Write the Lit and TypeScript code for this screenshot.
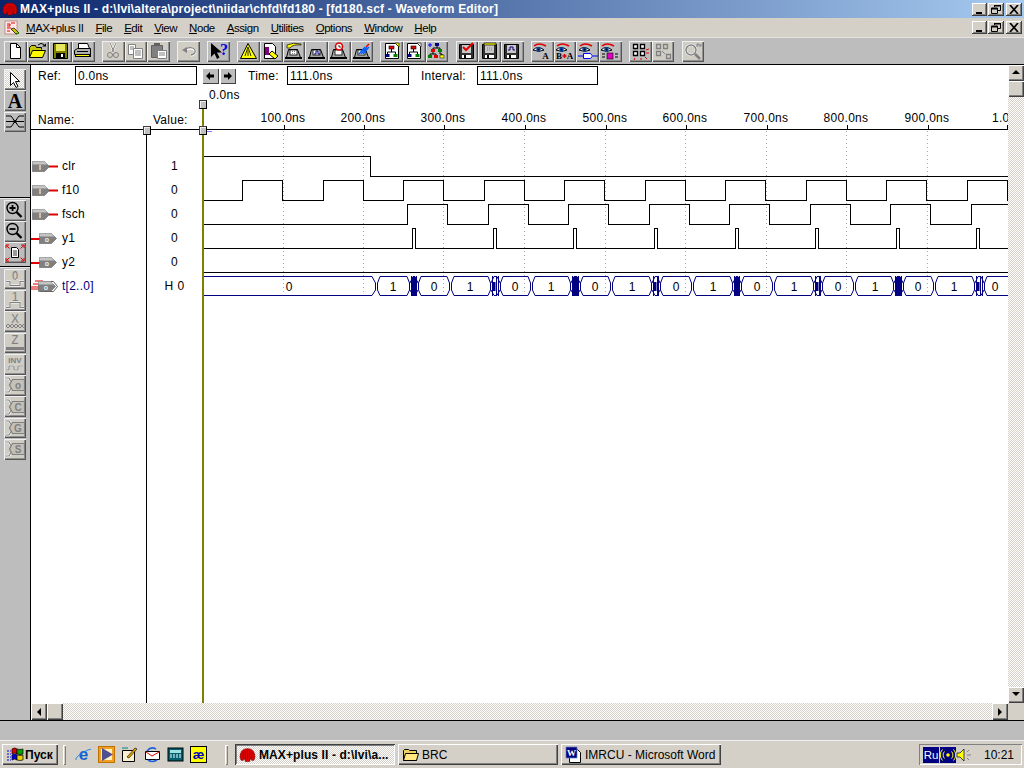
import { LitElement, html, css, svg } from "lit";
import { customElement } from "lit/decorators.js";

const K = "#000", G = "#808080", W = "#fff", N = "#000080", R = "#e00000", Y = "#ffff00";

const machine = (top: unknown, screen: unknown) => svg`
  <path d="M4.5 7.5h9l3 8h-14z" fill="#a8a8a8" stroke="${K}"/>
  <rect x="1" y="15" width="17" height="2" fill="${K}"/>
  <rect x="6" y="8" width="7" height="5" fill="${W}" stroke="${K}" stroke-width=".8"/>
  ${screen}${top}`;
const wave = svg`<path d="M7 12h2V9h2v3h2" fill="none" stroke="${N}"/>`;
const floppy = (inner: unknown) => svg`
  <path d="M2.5 2.5h14v14h-14z" fill="#303030" stroke="${K}"/>
  <rect x="5" y="3" width="9" height="8" fill="#c8c8c8"/>
  <rect x="5" y="13" width="9" height="3" fill="${W}"/><rect x="7" y="13" width="2" height="3" fill="${K}"/>
  ${inner}`;
const eye = (extra: unknown) => svg`
  <path d="M2 4q5-4 12 0" fill="none" stroke="${R}" stroke-width="1.6"/>
  <path d="M1 8q5-5 11 0q-5 3-11 0z" fill="${W}" stroke="${K}"/>
  <circle cx="6.5" cy="7.5" r="2.2" fill="#0050c0"/><circle cx="6.5" cy="7.5" r=".9" fill="${K}"/>
  ${extra}`;
const hier = (doc: boolean, fold: string) => svg`
  ${doc ? svg`<path d="M3.5 1.5h10l3 3v12h-13z" fill="${W}" stroke="${K}"/><path d="M13 1h4v4z" fill="${fold}" stroke="${K}" stroke-width=".6"/>` : ""}
  <rect x="7" y="4" width="5" height="3" fill="${R}" stroke="${K}" stroke-width=".6"/>
  <path d="M9.5 7v3M5.5 12v-2h8v2" fill="none" stroke="${K}"/>
  <rect x="3.5" y="12" width="4" height="3" fill="${N}"/><rect x="11.5" y="12" width="4" height="3" fill="#008000"/>`;
const lens = (c: string, inner: unknown) => svg`
  <circle cx="7.5" cy="7" r="5.5" fill="none" stroke="${c}" stroke-width="1.4"/>
  <path d="M11.5 11l5 5" stroke="${c}" stroke-width="2.4"/>${inner}`;
const dis = (ch: string, extra: unknown) => svg`
  <text x="10" y="10" text-anchor="middle" class="dt">${ch}</text>${extra}`;
const xbus = (ch: string) => svg`
  <path d="M1 2h3l4 7l-4 7H1" fill="none" stroke="${W}" stroke-width="2.4"/>
  <path d="M1 2h3l4 7l-4 7H1" fill="none" stroke="${G}" stroke-width="1.2"/>
  <path d="M19.5 3.500H7.500l-3 5.500l3 5.500h12z" fill="#c4c1b9" stroke="${G}" stroke-width="1.200"/>
  <text x="13" y="13" text-anchor="middle" class="dx">${ch}</text>`;

const ICONS: Record<string, unknown> = {
  new: svg`<path d="M5.5 1.5h6l4 4v11h-10z" fill="${W}" stroke="${K}"/><path d="M11.5 1.5v4h4" fill="none" stroke="${K}"/>`,
  open: svg`<path d="M1.5 15.5v-10l2-2h4l1 2h5v2" fill="#c8c800" stroke="${K}"/><path d="M1.5 15.5l3-7h13l-3 7z" fill="${Y}" stroke="${K}"/><path d="M10 3q3-3 6-.5" fill="none" stroke="${K}"/><path d="M14 4.500h4v-3z" fill="${K}"/>`,
  save: svg`<path d="M2.5 1.500h14v15h-14z" fill="#808000" stroke="${K}"/><rect x="5" y="2" width="9" height="7" fill="#e8e860"/><rect x="5" y="11" width="9" height="5" fill="${K}"/><rect x="10" y="12" width="2" height="3" fill="${W}"/>`,
  print: svg`<path d="M5.5 1.500h9l2 5h-11z" fill="${W}" stroke="${K}"/><path d="M1.500 8.500l3-2h13v6h-16z" fill="#b0b0b0" stroke="${K}"/><rect x="2" y="12" width="16" height="3" fill="${K}"/><rect x="4" y="9" width="11" height="1" fill="${K}"/><rect x="3" y="13" width="13" height="1" fill="${Y}"/>`,
  cut: svg`<path d="M7 1l4 9M13 1l-4 9" stroke="${W}" stroke-width="2"/><path d="M7 1l4 9M13 1l-4 9" stroke="${G}"/><circle cx="7" cy="13" r="2.500" fill="none" stroke="${G}"/><circle cx="13" cy="13" r="2.500" fill="none" stroke="${G}"/>`,
  copy: svg`<path d="M2.500 2.500h7v10h-7z" fill="${W}" stroke="${G}"/><path d="M7.500 6.500h9v10h-9z" fill="${W}" stroke="${G}"/><path d="M4 5h4M4 7h3M9 9h6M9 11h6M9 13h6" stroke="${G}"/>`,
  paste: svg`<path d="M2.500 3.500h11v12h-11z" fill="#808080" stroke="#606060"/><rect x="5" y="1" width="6" height="3" fill="#606060"/><path d="M8.500 8.500h9v8h-9z" fill="${W}" stroke="${G}"/><path d="M10 11h6M10 13h6" stroke="${G}"/>`,
  undo: svg`<path d="M6 7.500q8-3 10 1q1 4-4 5" fill="none" stroke="${W}" stroke-width="2.400"/><path d="M6 7q8-3 10 1q1 4-4 5" fill="none" stroke="${G}" stroke-width="1.300"/><path d="M3 8l5-3v6z" fill="${G}"/>`,
  help: svg`<path d="M2 1v14l3.500-3.500L8 17l2.500-1.500L8 10.500h5z" fill="${K}"/><text x="15" y="13" text-anchor="middle" class="q">?</text>`,
  tri: svg`<path d="M9 1.500l8.500 15H1.500z" fill="${Y}" stroke="${K}"/><path d="M9 5l-3 9M9 5l3 9M9 8v6" stroke="${K}" stroke-width=".8"/>`,
  doc: svg`<path d="M3.500 1.500h8l3 3v12h-11z" fill="${W}" stroke="${K}"/><rect x="4" y="5" width="4" height="8" fill="#800080"/><path d="M11 9l6 5l-3 3l-6-5z" fill="${Y}" stroke="${K}"/>`,
  m1: machine(svg`<path d="M3 6V3q6-3 14-1v1q-8-1-11 3z" fill="${Y}" stroke="${K}" stroke-width=".7"/>`, svg`<path d="M8 9.500h4M8 11.500h4" stroke="${G}" stroke-dasharray="1 1"/>`),
  m2: machine("", wave),
  m3: machine(svg`<circle cx="10" cy="4.500" r="3.500" fill="${W}" stroke="${R}" stroke-width="1.600"/><path d="M10 3v2h2" stroke="${K}" fill="none" stroke-width=".8"/>`, ""),
  m4: machine(svg`<path d="M7 12l6-7M9 12l6-7M11 12l6-7" stroke="#0060ff" stroke-width="1.300"/><path d="M14 5l3-3" stroke="${R}" stroke-width="1.500"/>`, ""),
  h1: hier(true, Y), h2: hier(true, W),
  h3: svg`<path d="M1 3h4M3 1v4" stroke="#0000ff"/><rect x="8" y="1" width="4" height="3" fill="${N}"/><rect x="4" y="7" width="4" height="3" fill="${R}"/><rect x="11" y="7" width="4" height="3" fill="#008000"/><rect x="1" y="13" width="4" height="3" fill="#008000"/><rect x="7" y="13" width="4" height="3" fill="${R}"/><rect x="13" y="13" width="4" height="3" fill="${Y}" stroke="${K}" stroke-width=".5"/><path d="M10 4v2M6 7V6h7v1M6 10v2M3 13v-1h6v1M13 10v2h2v1" fill="none" stroke="${K}"/>`,
  f1: floppy(svg`<path d="M6 5l3 3l7-7" fill="none" stroke="${R}" stroke-width="2"/>`),
  f2: floppy(svg`<path d="M4 3V1h12v2z" fill="${Y}" stroke="${K}" stroke-width=".7"/><path d="M7 6h5M7 8h5" stroke="${G}" stroke-dasharray="1 1"/>`),
  f3: floppy(svg`<path d="M6 8h2V5h3v3h2" fill="none" stroke="${N}"/>`),
  e1: eye(svg`<text x="13.500" y="17" text-anchor="middle" class="ea">A</text>`),
  e2: eye(svg`<text x="4" y="17" text-anchor="middle" class="ea">B</text><path d="M7.500 14h4M9.500 12v4" stroke="${R}" stroke-width="1.500"/><text x="15" y="17" text-anchor="middle" class="ea">A</text>`),
  e3: eye(svg`<path d="M0 14h5M15 14h5" stroke="#0000ff"/><path d="M5.500 11.500h7l2 2.500l-2 2.500h-7z" fill="${W}" stroke="#0000ff"/>`),
  e4: eye(svg`<rect x="7" y="11" width="6" height="6" fill="#e000c0" stroke="${K}" stroke-width=".6"/><path d="M2 12h3M2 15h3M15 12h3M15 15h3" stroke="${K}"/>`),
  g1: svg`<path d="M3.500 2.500h4v4h-4zM10.500 2.500h4v4h-4zM3.500 9.500h4v4h-4zM10.500 9.500h4v4h-4z" fill="${W}" stroke="${K}" stroke-width="1.300"/><path d="M16 8l3-1M16 11h3M5 16l-1 2M11 16v2M15 15l2 2" stroke="${R}"/>`,
  g2: svg`<path d="M3.500 2.500h4v4h-4zM10.500 2.500h4v4h-4zM3.500 9.500h4v4h-4zM13.500 12.500h4v4h-4z" fill="none" stroke="${G}" stroke-width="1.300"/><path d="M9 9l3 3" stroke="${G}"/>`,
  g3: svg`<circle cx="8" cy="8" r="5" fill="none" stroke="${W}" stroke-width="2.500"/><circle cx="8" cy="8" r="5" fill="none" stroke="${G}" stroke-width="1.500"/><path d="M12 12l5 5" stroke="${G}" stroke-width="2.500"/><path d="M14 5V2h2v2h2V2" fill="none" stroke="${G}"/>`,
  arrow: svg`<path d="M5.500 2.500v13l3-3l2.500 5l2-1l-2.500-5h4z" fill="${W}" stroke="${K}"/>`,
  cross: svg`<path d="M1 3h5l8 11h5M1 14h5l8-11h5" fill="none" stroke="${K}"/><path d="M1 8.500h18" stroke="${K}"/><path d="M8 6l2 2.500l2-2.500M8 11l2-2.500l2 2.500" fill="none" stroke="${K}"/>`,
  zin: lens(K, svg`<path d="M4.500 7h6M7.500 4v6" stroke="${K}" stroke-width="1.800"/>`),
  zout: lens(K, svg`<path d="M4.500 7h6" stroke="${K}" stroke-width="1.800"/>`),
  fit: svg`<path d="M6.500 3.500h5l2 2v8h-7z" fill="${W}" stroke="${K}"/><path d="M8 7h4M8 9h4M8 11h4" stroke="${K}" stroke-width=".8"/><path d="M1.500 1.500l3 3M18.500 1.500l-3 3M1.500 16.500l3-3M18.500 16.500l-3-3M1 4V1h3M16 1h3v3M1 14v3h3M16 17h3v-3" fill="none" stroke="${R}"/>`,
  d0: dis("0", svg`<path d="M1 11.500h4v4h10v-4h4" fill="none" stroke="${W}" stroke-width="2"/><path d="M1 11.500h4v4h10v-4h4" fill="none" stroke="${G}" stroke-width="1.200"/>`),
  d1: dis("1", svg`<path d="M1 16.500h4v-5h10v5h4" fill="none" stroke="${W}" stroke-width="2"/><path d="M1 16.500h4v-5h10v5h4" fill="none" stroke="${G}" stroke-width="1.200"/>`),
  dx: dis("X", svg`<path d="M1 13l2-2l2 2l2-2l2 2l2-2l2 2l2-2l2 2l2-2M1 13l2 2l2-2l2 2l2-2l2 2l2-2l2 2l2-2l2 2" fill="none" stroke="${G}"/>`),
  dz: dis("Z", svg`<rect x="1" y="13" width="18" height="3" fill="${G}"/>`),
  dinv: svg`<text x="10" y="8" text-anchor="middle" class="dinv">INV</text><path d="M1 15h3v-4h5v4h4v-4h5" fill="none" stroke="${W}" stroke-width="2"/><path d="M1 15h3v-4h5v4h4v-4h5" fill="none" stroke="${G}" stroke-width="1.200"/>`,
  xo: xbus("o"), xc: xbus("C"), xg: xbus("G"), xs: xbus("S"),
};

const icon = (k: string) => html`<svg class="ic" width="20" height="18" viewBox="0 0 20 18">${ICONS[k]}</svg>`;

const TOOLBAR: { icons: string[]; off?: boolean }[] = [
  { icons: ["new", "open", "save", "print"] },
  { icons: ["cut", "copy", "paste"], off: true },
  { icons: ["undo"], off: true },
  { icons: ["help"] },
  { icons: ["tri", "doc", "m1", "m2", "m3", "m4"] },
  { icons: ["h1", "h2", "h3"] },
  { icons: ["f1", "f2", "f3"] },
  { icons: ["e1", "e2", "e3", "e4"] },
];

const MENU: [string, string][] = [["M", "AX+plus II"], ["F", "ile"], ["E", "dit"], ["V", "iew"], ["N", "ode"], ["A", "ssign"], ["U", "tilities"], ["O", "ptions"], ["W", "indow"], ["H", "elp"]];

const logo = html`<svg width="16" height="14" viewBox="0 0 16 14">
  <path d="M1 9q0-8 7-8t7 8l-1 3h-2l-1-2l-1 3H6L5 10l-1 2H2z" fill="#e00000" stroke="#800000" stroke-width=".6"/>
  <path d="M4 4v6M8 2v9M12 4v6M6 3v7M10 3v7" stroke="#800000" stroke-width=".6"/></svg>`;

const winBtns = html`<div class="wb">
  <button class="wbtn"><svg width="10" height="9" viewBox="0 0 10 9"><rect x="1" y="7" width="6" height="2"/></svg></button>
  <button class="wbtn r2"><svg width="10" height="9" viewBox="0 0 10 9"><path d="M3.500 2V.5h6v5H7M.5 3.500h6v5h-6z M.5 3h6" fill="none" stroke="#000"/><path d="M3 0h7v1.500H3zM0 3h7v1.500H0z"/></svg></button>
  <button class="wbtn r3"><svg width="10" height="9" viewBox="0 0 10 9"><path d="M1 0l8 9M9 0l-8 9" stroke="#000" stroke-width="1.700"/></svg></button>
</div>`;

type Sig = { name: string; value: string; kind: "in" | "out" | "bus"; };
const SIGNALS: Sig[] = [
  { name: "clr", value: "1", kind: "in" },
  { name: "f10", value: "0", kind: "in" },
  { name: "fsch", value: "0", kind: "in" },
  { name: "y1", value: "0", kind: "out" },
  { name: "y2", value: "0", kind: "out" },
  { name: "t[2..0]", value: "H 0", kind: "bus" },
];

const PENT = "M0.500 2.500h12l5 5l-5 5h-12z";
const pinShape = (x: number, ch: string) => svg`<g transform="translate(${x} 0)">
  <path d="${PENT}" fill="#808080" stroke="#606060" stroke-width=".6"/>
  <path d="M.5 2.500h12l3 3H.5z" fill="#c4c4c4"/>
  <text x="8" y="11" text-anchor="middle" class="pt">${ch}</text></g>`;
const pin = (k: Sig["kind"]) => html`<svg class="pin" width="31" height="15" viewBox="0 0 31 15">
  ${k === "in" ? svg`${pinShape(1, "I")}<rect x="18" y="6.500" width="9" height="2" fill="#e00000"/>` : ""}
  ${k === "out" ? svg`<rect x="0" y="7" width="9" height="2" fill="#e00000"/>${pinShape(8, "o")}` : ""}
  ${k === "bus" ? svg`<path d="M4 2h8M2 5h8M0 8h8M0 10h8" stroke="#e00000" stroke-width="1.200"/>
    <path d="M9.500 2.500h13l4 5l-4 5h-13z" fill="none" stroke="#606060"/>${pinShape(7, "o")}` : ""}
</svg>`;

const GRID = [283, 363, 443, 524, 605, 685, 766, 846, 927];
const LABELS = ["100.0ns", "200.0ns", "300.0ns", "400.0ns", "500.0ns", "600.0ns", "700.0ns", "800.0ns", "900.0ns"];

function digital(lo: number, hi: number, startHigh: boolean, toggles: number[]) {
  let s = startHigh;
  let d = `M203 ${(s ? hi : lo) + 0.5}`;
  for (const t of toggles) {
    d += `H${Math.round(t) + 0.5}`;
    s = !s;
    d += `V${(s ? hi : lo) + 0.5}`;
  }
  return d + "H1008";
}
const seq = (start: number, step: number, end: number) => {
  const out: number[] = [];
  for (let x = start; x < end; x += step) out.push(x);
  return out;
};
const f10T = seq(242.2, 40.25, 1008);
const fschT = seq(407, 40.25, 1008);
const y1Pulse = [412, 493, 573, 654, 734.5, 815, 896, 976];
const y1T = y1Pulse.flatMap((x) => [x, x + 3]);

const SEG: [number, number, string, number][] = [
  [377, 410, "1", 393], [418, 450, "0", 434], [451, 491, "1", 470], [500, 531, "0", 515],
  [532, 571, "1", 551], [580, 611, "0", 595], [612, 652, "1", 632], [660, 692, "0", 676],
  [693, 733, "1", 713], [741, 773, "0", 757], [774, 814, "1", 794], [822, 854, "0", 838],
  [855, 894, "1", 875], [903, 934, "0", 918], [935, 975, "1", 954], [984, 1012, "0", 995],
];
const hexPath = (a: number, b: number) =>
  `M${a + 3} 276.5H${b - 3}L${b - 0.5} 283V290L${b - 3} 295.5H${a + 3}L${a + 0.5} 290V283Z`;

const MESS = [[410, 418], [491, 500], [571, 580], [652, 660], [733, 741], [814, 822], [894, 903], [975, 984]];

@customElement("app-root")
export class AppRoot extends LitElement {
  static styles = css`
    :host { display: block; width: 1024px; height: 768px; overflow: hidden; font: 12px "Liberation Sans", Arial, sans-serif; color: #000; background: #d4d0c8; }
    * { box-sizing: border-box; }
    .app { display: flex; flex-direction: column; height: 768px; }
    svg { display: block; flex: none; }
    .title { height: 18px; flex: none; display: flex; align-items: center; padding: 0 2px; background: linear-gradient(90deg, #0a246a, #a6caf0); color: #fff; font-weight: 700; font-size: 12px; letter-spacing: .19px; white-space: nowrap; }
    .title .t { margin-left: 2px; flex: 1; }
    .wb { display: flex; width: 50px; height: 13px; }
    .wbtn { width: 15px; height: 13px; padding: 0; background: #d4d0c8; border: 0; box-shadow: inset -1px -1px #404040, inset 1px 1px #fff, inset -2px -2px #808080; display: flex; align-items: center; justify-content: center; }
    .r2 { margin-left: 1px; width: 16px; } .r3 { margin-left: 2px; width: 16px; }
    .menu { height: 19px; display: flex; align-items: center; padding: 0 2px 0 4px; background: #d4d0c8; white-space: nowrap; font-size: 11.5px; letter-spacing: -.45px; gap: 12px; flex: none; }
    .menu .gap { flex: 1; }
    .menu .micon { margin-right: -6px; }
    .toolbar { height: 28px; flex: none; background: #bdbdbd; border-top: 1px solid #e4e4e4; border-bottom: 1px solid #000; display: flex; align-items: center; padding-left: 4px; gap: 7.33px; }
    .grp { display: flex; }
    .btn { width: 22.67px; height: 21px; flex: none; display: flex; align-items: center; justify-content: center; background: #bdbdbd; box-shadow: inset 1px 1px #f0f0f0, inset -1px -1px #555, inset -2px -2px #909090; }
    .off .btn, .btn.off { background: #d0cdc5; }
    .btn.tight { margin-left: -7.33px; }
    .work { flex: 1; display: flex; min-height: 0; }
    .tools { width: 31px; flex: none; background: #bdbdbd; border-right: 1px solid #000; display: flex; flex-direction: column; padding-top: 4px; }
    .tools .btn { margin: 0 0 .6px 4px; height: 20.7px; width: 22px; }
    .tools .sel { background: repeating-conic-gradient(#fff 0 25%, #d4d0c8 0 50%) 0 0 / 2px 2px; }
    .btn.bigA { font: 700 20px/1 "Liberation Serif", serif; }
    .tsep { height: 2px; flex: none; border-top: 1px solid #000; border-bottom: 1px solid #e8e8e8; }
    .s1 { margin-top: 64px; margin-bottom: 1px; }
    .s2 { margin-top: 2px; margin-bottom: 1px; }
    .right { flex: 1; display: flex; flex-direction: column; min-width: 0; }
    .upper { flex: 1; display: flex; min-height: 0; }
    .canvas { position: relative; flex: 1; background: #fff; display: flex; flex-direction: column; min-width: 0; overflow: hidden; font-size: 12px; }
    .fields { height: 20px; flex: none; display: flex; align-items: center; padding: 1px 0 0 7px; letter-spacing: .25px; }
    .lab { flex: none; }
    .lr { width: 37px; } .lt { width: 39px; margin-left: 12px; } .li { width: 56px; margin-left: 12px; }
    .box { height: 19px; border: 1px solid #000; padding: 0 2px; display: flex; align-items: center; flex: none; }
    .b1 { width: 122px; } .b2 { width: 120.5px; }
    .nav { display: flex; margin-left: 5px; gap: 1px; }
    .nbtn { width: 16.5px; height: 16px; background: #bdbdbd; box-shadow: inset 1px 1px #fff, inset -1px -1px #404040; display: flex; align-items: center; justify-content: center; }
    .head { height: 45px; flex: none; display: flex; border-bottom: 1px solid #000; letter-spacing: .25px; }
    .hn { width: 116px; padding: 28px 0 0 7px; } .hv { width: 56px; padding: 28px 0 0 6px; }
    .ruler text { font: 12px "Liberation Sans", Arial, sans-serif; letter-spacing: .3px; }
    .body { flex: 1; display: flex; min-height: 0; }
    .names { width: 116px; flex: none; border-right: 1px solid #000; padding-top: 24px; }
    .values { width: 56px; flex: none; padding-top: 24px; }
    .row { height: 24px; display: flex; align-items: center; font-size: 12px; letter-spacing: .25px; }
    .bus { color: #000080; }
    .vrow { justify-content: center; padding-right: 1px; letter-spacing: .5px; }
    .wave text { font: 12px "Liberation Sans", Arial, sans-serif; fill: #000; }
    .cursor { position: absolute; left: 171px; top: 43px; bottom: 0; width: 2px; background: #808000; }
    .mark { position: absolute; left: 176px; top: 66px; width: 5px; height: 1px; background: #8080ff; }
    .h { position: absolute; width: 8px; height: 9px; background: #c0c0c0; border: 1px solid #000; border-color: #404040 #000 #000 #404040; box-shadow: inset 1px 1px #eee; }
    .h1 { left: 112px; top: 61px; } .h2 { left: 168px; top: 61px; } .h3 { left: 168px; top: 35px; }
    .vs { width: 16px; flex: none; display: flex; flex-direction: column; }
    .hs { height: 17px; flex: none; display: flex; }
    .track { flex: 1; background: repeating-conic-gradient(#fff 0 25%, #d4d0c8 0 50%) 0 0 / 2px 2px; }
    .sb { background: #d4d0c8; box-shadow: inset 1px 1px #fff, inset -1px -1px #404040, inset -2px -2px #808080; display: flex; align-items: center; justify-content: center; flex: none; width: 16px; height: 16px; }
    .hs .sb { height: 17px; }
    .corner { width: 16px; flex: none; background: #d4d0c8; }
    .status { height: 21px; flex: none; background: #bdbdbd; border-top: 1px solid #000; border-bottom: 1px solid #f0f0f0; }
    .task { height: 27px; flex: none; background: #d4d0c8; display: flex; align-items: center; padding-left: 2px; white-space: nowrap; font-size: 12px; }
    .tb { height: 21px; display: flex; align-items: center; box-shadow: inset 1px 1px #fff, inset -1px -1px #404040, inset -2px -2px #808080; flex: none; overflow: hidden; }
    .start { width: 56px; font-weight: 700; padding-left: 5px; gap: 1px; font-size: 12px; }
    .div { width: 3px; height: 20px; margin-left: 5px; box-shadow: inset 1px 1px #fff, inset -1px -1px #808080; flex: none; }
    .ql { display: flex; margin-left: 9px; gap: 6px; }
    .ql svg { overflow: visible; }
    .d2 { margin-left: 18px; }
    .win { width: 160px; padding-left: 4px; gap: 3px; margin-left: 7px; }
    .win.on { font-weight: 700; background: repeating-conic-gradient(#fff 0 25%, #d4d0c8 0 50%) 0 0 / 2px 2px; box-shadow: inset 1px 1px #404040, inset -1px -1px #fff, inset 2px 2px #808080; letter-spacing: .1px; }
    .win + .win { margin-left: 3px; }
    .tray { margin-left: auto; margin-right: 2px; width: 103px; height: 21px; flex: none; display: flex; align-items: center; padding-left: 4px; box-shadow: inset 1px 1px #808080, inset -1px -1px #fff; }
    .ru { width: 16px; height: 16px; background: #000080; color: #fff; display: flex; align-items: center; justify-content: center; font-size: 11.5px; margin-right: 1px; }
    .clock { margin-left: 11px; }
    .dt { font: 700 12px "Liberation Sans", Arial, sans-serif; fill: #808080; stroke: #fff; stroke-width: .2px; }
    .dx { font: 700 10px "Liberation Sans", Arial, sans-serif; fill: #808080; }
    .dinv { font: 700 8px "Liberation Sans", Arial, sans-serif; fill: #808080; }
    .q { font: 700 16px "Liberation Serif", serif; fill: #0000e0; }
    .ea { font: 700 9px "Liberation Serif", serif; fill: #000; }
    .pt { font: 700 7px "Liberation Sans", Arial, sans-serif; fill: #f0f0f0; }
    .e { font: 700 17px "Liberation Sans", Arial, sans-serif; fill: #1060d0; }
    .ae { font: 700 13px "Liberation Sans", Arial, sans-serif; fill: #0000c0; }
    .wd { font: 700 9px "Liberation Serif", serif; fill: #fff; }
  `;

  private ruler() {
    return html`<svg class="ruler" width="805" height="44" viewBox="203 85 805 44">
      <text x="209" y="99">0.0ns</text>
      ${GRID.map((x, i) => svg`
        <path d="M${x + 1.5} 125V129" stroke="#000"/>
        <text x="${x}" y="122" text-anchor="middle">${LABELS[i]}</text>`)}
      <path d="M1007.500 125V129" stroke="#000"/>
      <text x="992" y="122">1.0us</text>
    </svg>`;
  }

  private wave() {
    return html`<svg class="wave" width="805" height="573" viewBox="203 130 805 573">
      ${GRID.map((x) => svg`<path d="M${x + 0.5} 131V297" stroke="#a8a8a8" stroke-dasharray="1 3" shape-rendering="crispEdges"/>`)}
      <g fill="none" stroke="#000" shape-rendering="crispEdges">
        <path d="${digital(176, 156, true, [370])}"/>
        <path d="${digital(200, 180, false, f10T)}"/>
        <path d="${digital(224, 204, false, fschT)}"/>
        <path d="${digital(248, 228, false, y1T)}"/>
        <path d="M203 272.500H1008"/>
      </g>
      <g fill="none" stroke="#000080">
        <path d="M203 276.500H372L375.500 283V290L372 295.500H203"/>
        ${SEG.map(([a, b]) => svg`<path d="${hexPath(a, b)}"/>`)}
        ${MESS.map(([a, b], i) => svg`
          <path d="M${a} 283L${a + 3} 276.500H${b - 3}L${b} 283M${a} 290L${a + 3} 295.500H${b - 3}L${b} 290"/>
          <path d="M${a + 1.500} 276V296M${b - 1.500} 276V296"/>
          ${i % 2 ? svg`<path d="M${a + 5.500} 276V296"/>` : ""}
          <rect x="${a + 2}" y="${i % 2 ? 282 : 277}" width="${i % 2 ? 2.5 : b - a - 4}" height="${i % 2 ? 9 : 19}" fill="#000080" stroke="none"/>`)}
      </g>
      <text x="289" y="291" text-anchor="middle">0</text>
      ${SEG.map(([, , t, x]) => svg`<text x="${x}" y="291" text-anchor="middle">${t}</text>`)}
    </svg>`;
  }

  private sb(dir: "u" | "d" | "l" | "r") {
    const p = { u: "M0 5h8L4 1z", d: "M0 1h8L4 5z", l: "M6 0v8L2 4z", r: "M2 0v8L6 4z" }[dir];
    return html`<div class="sb"><svg width="8" height="8" viewBox="0 0 8 8"><path d="${p}"/></svg></div>`;
  }

  render() {
    const smallIcon = html`<svg width="17" height="16" viewBox="0 0 16 14">${logo}</svg>`;
    return html`<div class="app">
      <div class="title">${logo}<span class="t">MAX+plus II - d:\\lvi\\altera\\project\\niidar\\chfd\\fd180 - [fd180.scf - Waveform Editor]</span>${winBtns}</div>
      <div class="menu">
        <svg class="micon" width="16" height="16" viewBox="0 0 16 16"><rect x="1" y="1" width="12" height="13" fill="#ffe8e8" stroke="#a06060" stroke-width=".6"/><path d="M3 4h3v2H3M7 3h4M3 8h4M3 11h3" fill="none" stroke="#e00000"/><path d="M7 9l5 5l3-1l-5-5z" fill="#d0c000" stroke="#000" stroke-width=".7"/><path d="M12 14l3-1" stroke="#008000"/></svg>
        ${MENU.map(([u, r]) => html`<span><u>${u}</u>${r}</span>`)}
        <span class="gap"></span>${winBtns}
      </div>
      <div class="toolbar">
        ${TOOLBAR.map((g) => html`<div class="grp ${g.off ? "off" : ""}">${g.icons.map((k) => html`<div class="btn">${icon(k)}</div>`)}</div>`)}
        <div class="btn">${icon("g1")}</div>
        <div class="btn off tight">${icon("g2")}</div>
        <div class="btn off">${icon("g3")}</div>
      </div>
      <div class="work">
        <div class="tools">
          <div class="btn sel">${icon("arrow")}</div>
          <div class="btn bigA">A</div>
          <div class="btn">${icon("cross")}</div>
          <div class="tsep s1"></div>
          <div class="btn">${icon("zin")}</div>
          <div class="btn">${icon("zout")}</div>
          <div class="btn">${icon("fit")}</div>
          <div class="tsep s2"></div>
          ${["d0", "d1", "dx", "dz", "dinv", "xo", "xc", "xg", "xs"].map((k) => html`<div class="btn off">${icon(k)}</div>`)}
        </div>
        <div class="right">
          <div class="upper">
            <div class="canvas">
              <div class="fields">
                <span class="lab lr">Ref:</span><div class="box b1">0.0ns</div>
                <div class="nav">
                  <div class="nbtn"><svg width="8" height="8" viewBox="0 0 8 8"><path d="M0 4L4 0v2.500h4v3H4V8z"/></svg></div>
                  <div class="nbtn"><svg width="8" height="8" viewBox="0 0 8 8"><path d="M8 4L4 0v2.500H0v3h4V8z"/></svg></div>
                </div>
                <span class="lab lt">Time:</span><div class="box b1">111.0ns</div>
                <span class="lab li">Interval:</span><div class="box b2">111.0ns</div>
              </div>
              <div class="head"><div class="hn">Name:</div><div class="hv">Value:</div>${this.ruler()}</div>
              <div class="body">
                <div class="names">${SIGNALS.map((s) => html`<div class="row ${s.kind === "bus" ? "bus" : ""}">${pin(s.kind)}<span>${s.name}</span></div>`)}</div>
                <div class="values">${SIGNALS.map((s) => html`<div class="row vrow">${s.value}</div>`)}</div>
                ${this.wave()}
              </div>
              <div class="cursor"></div><div class="mark"></div>
              <div class="h h1"></div><div class="h h2"></div><div class="h h3"></div>
            </div>
            <div class="vs">${this.sb("u")}<div class="sb"></div><div class="track"></div>${this.sb("d")}</div>
          </div>
          <div class="hs">${this.sb("l")}<div class="sb"></div><div class="track"></div>${this.sb("r")}<div class="corner"></div></div>
        </div>
      </div>
      <div class="status"></div>
      <div class="task">
        <div class="tb start">
          <svg width="17" height="15" viewBox="0 0 17 15"><path d="M5 2q3-2 5 0v5q-2-2-5 0z" fill="#e00000" stroke="#000" stroke-width=".7"/><path d="M10 2q3 1 6 0v5q-3 1-6 0z" fill="#00a000" stroke="#000" stroke-width=".7"/><path d="M5 8q3-2 5 0v5q-2-2-5 0z" fill="#0000e0" stroke="#000" stroke-width=".7"/><path d="M10 8q3 1 6 0v5q-3 1-6 0z" fill="#e8d000" stroke="#000" stroke-width=".7"/><path d="M0 4h4M0 7h4M0 10h4M0 13h4" stroke="#0000e0" stroke-dasharray="2 1"/></svg>
          <span>Пуск</span>
        </div>
        <div class="div"></div>
        <div class="ql">
          <svg width="17" height="17" viewBox="0 0 17 17"><text x="8.500" y="14" text-anchor="middle" class="e">e</text><path d="M1 14q-1-3 8-8q7-4 7-2" fill="none" stroke="#2080e0"/></svg>
          <svg width="17" height="17" viewBox="0 0 17 17"><rect x=".5" y=".5" width="16" height="16" fill="#f0a020" stroke="#c07000"/><rect x="3" y="3" width="11" height="11" fill="#fff0c0"/><path d="M4 2l11 6.500L4 15z" fill="#505090"/></svg>
          <svg width="17" height="17" viewBox="0 0 17 17"><path d="M1.500 4.500h12v11h-12z" fill="#f8f0d0" stroke="#000"/><path d="M6 11l8-9l2 1l-8 9z" fill="#e0a000" stroke="#000" stroke-width=".6"/><path d="M1 2h6" stroke="#008080"/></svg>
          <svg width="17" height="17" viewBox="0 0 17 17"><path d="M1.500 5.500h14v8h-14z" fill="#fff" stroke="#000"/><path d="M2 6l6 4l7-4" fill="none" stroke="#e00000"/><path d="M3 5q4-5 9-2M13 14q-5 3-9 0" fill="none" stroke="#2060e0" stroke-width="1.600"/></svg>
          <svg width="17" height="17" viewBox="0 0 17 17"><rect x="1" y="2" width="15" height="13" fill="#006070" stroke="#000"/><rect x="3" y="4" width="11" height="3" fill="#a0e0e0"/><path d="M3 9h11M3 11h11" stroke="#fff" stroke-dasharray="2 1"/></svg>
          <svg width="17" height="17" viewBox="0 0 17 17"><rect x=".5" y=".5" width="16" height="16" fill="#ffff00" stroke="#000"/><text x="8.500" y="13" text-anchor="middle" class="ae">æ</text></svg>
        </div>
        <div class="div d2"></div>
        <div class="tb win on">${smallIcon}<span>MAX+plus II - d:\\lvi\\a...</span></div>
        <div class="tb win"><svg width="17" height="15" viewBox="0 0 17 15"><path d="M1.500 13.500v-10l1-1h4l1 1h7v10z" fill="#f0d060" stroke="#000"/><path d="M1.500 13.500l2-7h13l-2 7z" fill="#ffe880" stroke="#000"/></svg><span>BRC</span></div>
        <div class="tb win"><svg width="17" height="17" viewBox="0 0 17 17"><path d="M4.500 3.500h8l3 3v10h-11z" fill="#fff" stroke="#000"/><rect x="1" y="1" width="11" height="11" fill="#000080" stroke="#6080c0" stroke-width=".7"/><text x="6.500" y="10" text-anchor="middle" class="wd">W</text></svg><span>IMRCU - Microsoft Word</span></div>
        <div class="tray">
          <div class="ru">Ru</div>
          <svg width="16" height="16" viewBox="0 0 16 16"><rect width="16" height="16" fill="#000080"/><circle cx="8" cy="8" r="1.800" fill="#ffff00"/><path d="M4.500 4.500a5 5 0 0 0 0 7M11.500 4.500a5 5 0 0 1 0 7M2.500 2.500a8 8 0 0 0 0 11M13.500 2.500a8 8 0 0 1 0 11" fill="none" stroke="#ffff00"/></svg>
          <svg width="17" height="16" viewBox="0 0 17 16"><path d="M1 6h3l4-4v12l-4-4H1z" fill="#ffff00" stroke="#000" stroke-width=".7"/><path d="M11 5l2-2M11 8h4M11 11l2 2" stroke="#808080"/></svg>
          <span class="clock">10:21</span>
        </div>
      </div>
    </div>`;
  }
}
